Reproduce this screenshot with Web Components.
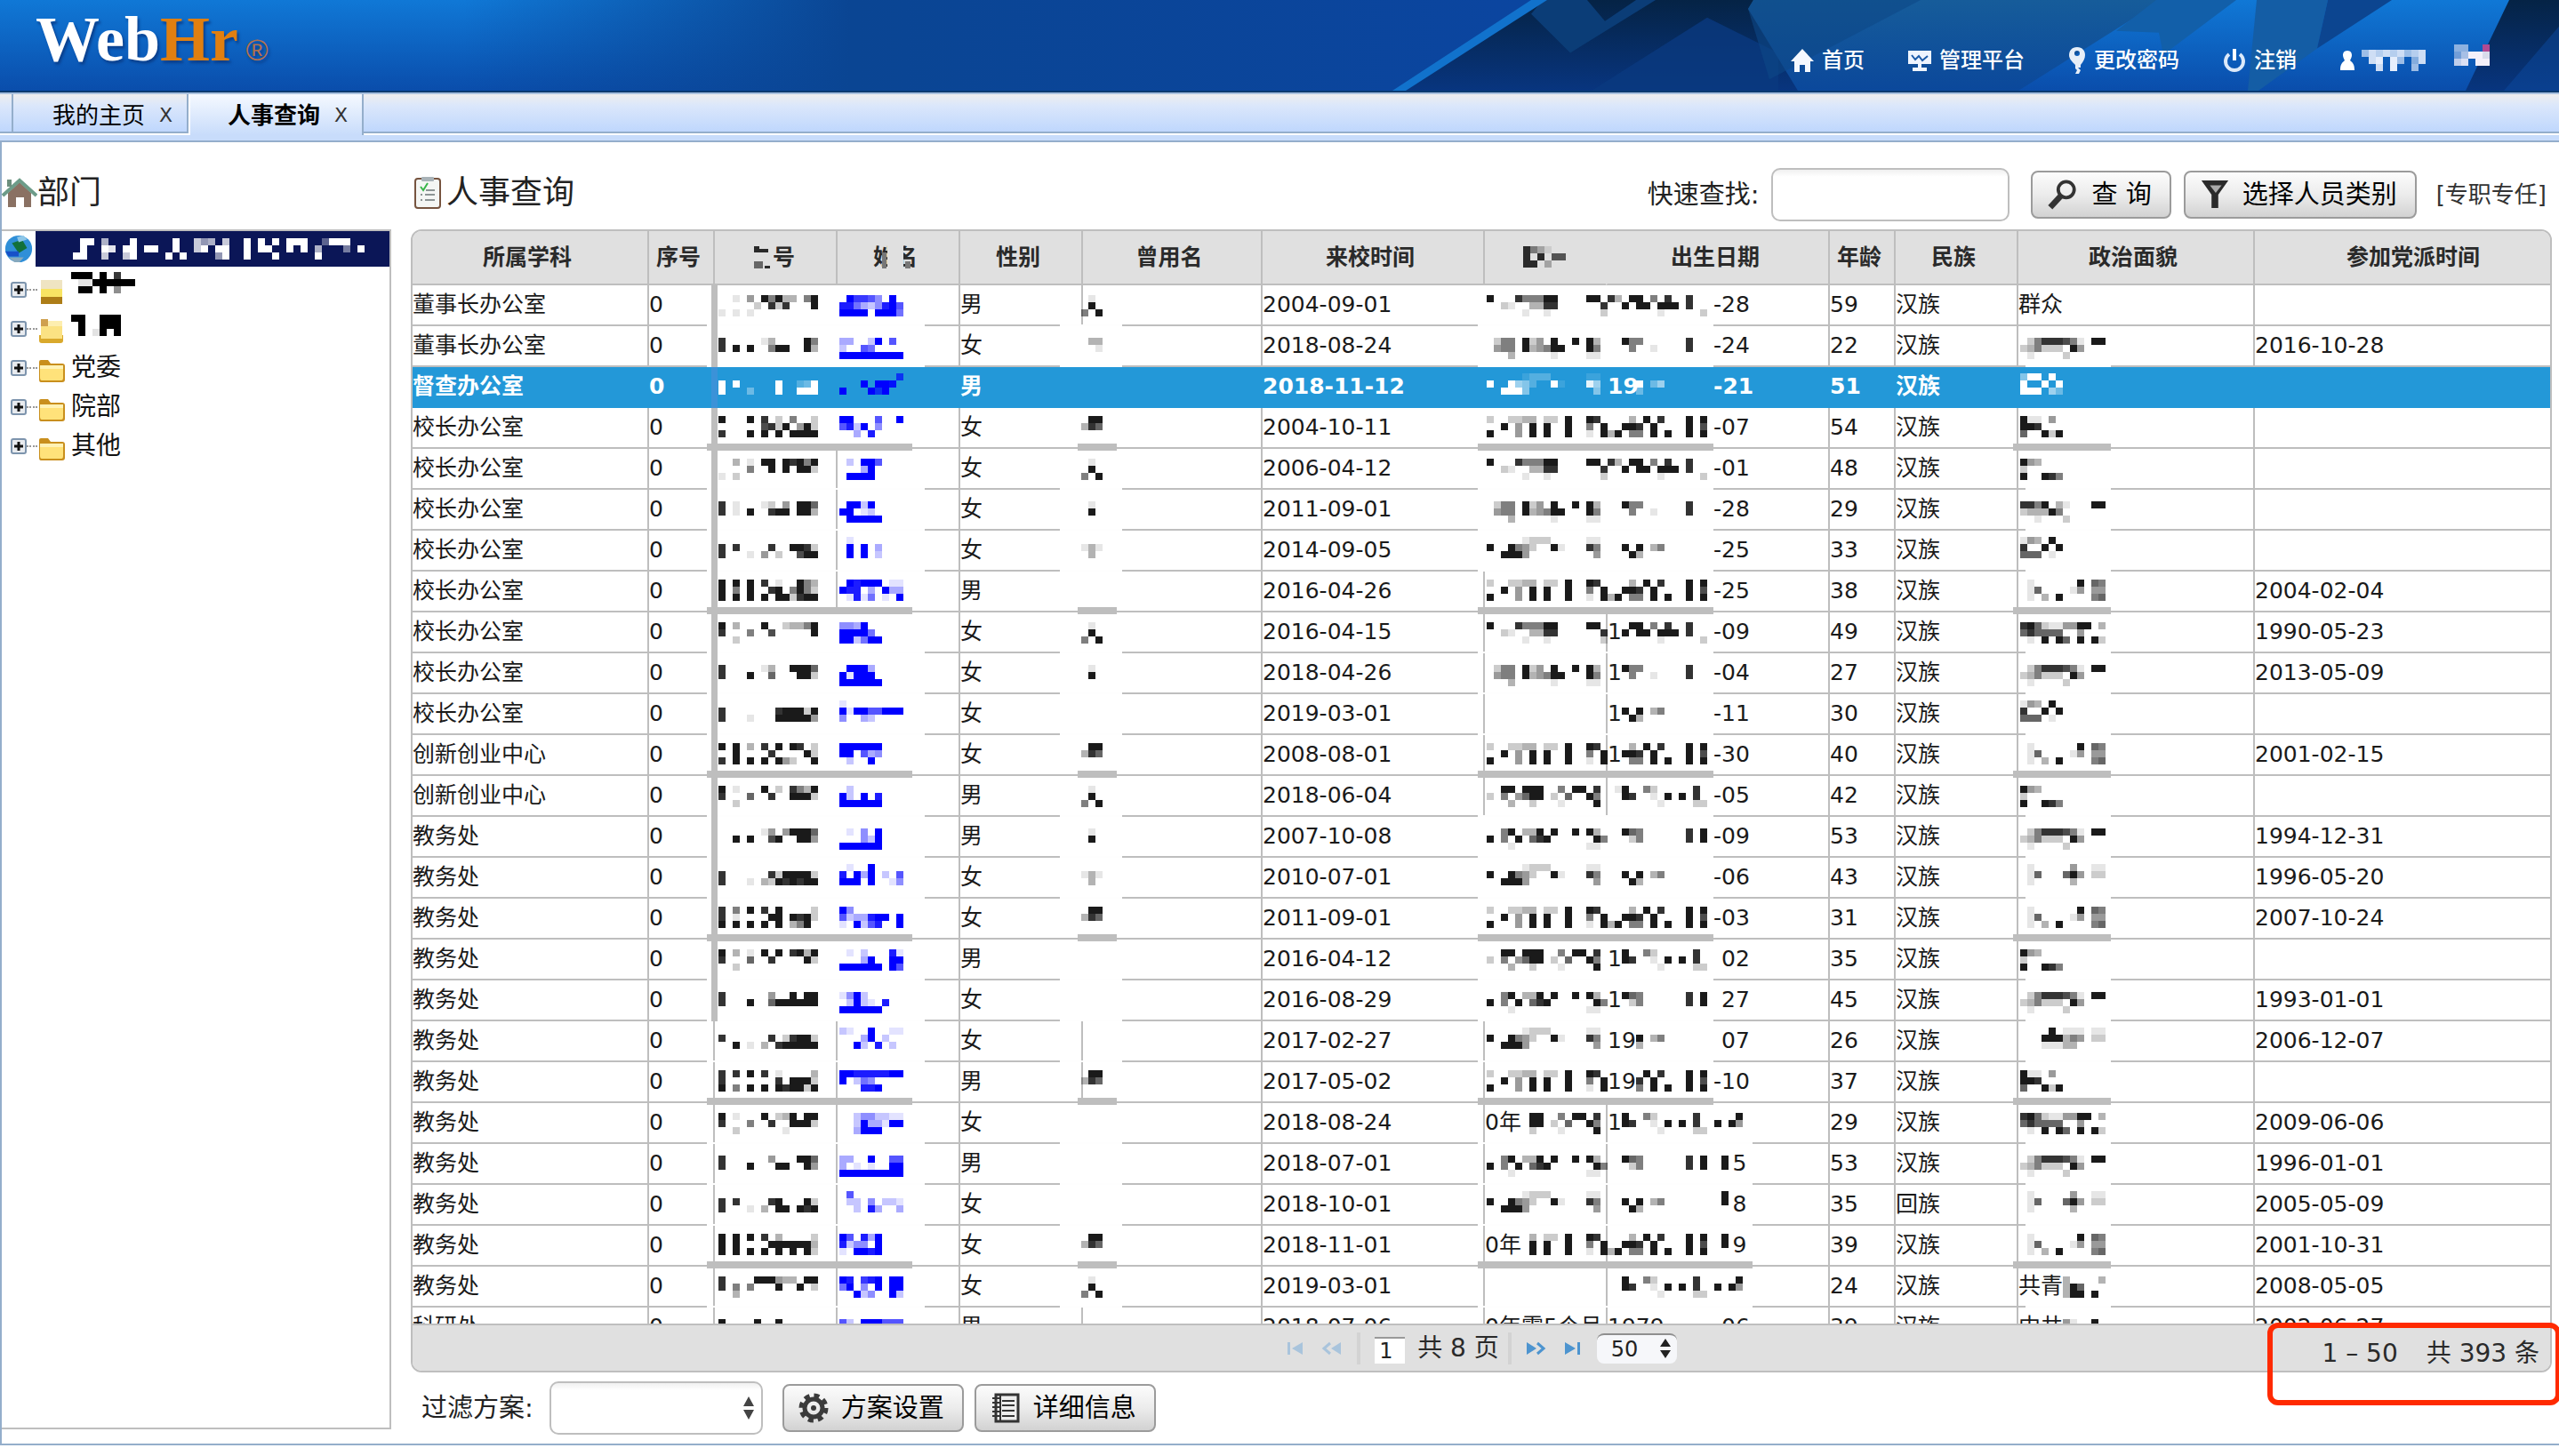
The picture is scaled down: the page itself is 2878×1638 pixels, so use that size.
<!DOCTYPE html>
<html lang="zh-CN">
<head>
<meta charset="utf-8">
<title>WebHr 人事查询</title>
<style>
  html, body { margin: 0; height: 100%; }
  body { font-family: "DejaVu Sans", "Noto Sans CJK SC", sans-serif; color: #1a1a1a; background: #fff; overflow: hidden; }
</style>
</head>
<body>
<hr-app></hr-app>
<script>
const FONT = '"DejaVu Sans", "Noto Sans CJK SC", sans-serif';
const LINE = '#bebebe';

function define(name, render, after) {
  customElements.define(name, class extends HTMLElement {
    constructor() { super(); this.attachShadow({ mode: 'open' }); }
    connectedCallback() {
      this.shadowRoot.innerHTML = render(this);
      if (after) after(this.shadowRoot, this);
    }
  });
}

/* ---------- icons ---------- */
const ICONS = {
  home: ['0 0 28 28', '<path fill="#f4f8ff" d="M14 1 27 15h-4v12h-6v-8h-6v8H5V15H1z"/>'],
  monitor: ['0 0 28 28', '<path fill="#eef4ff" d="M1 3h26v15H16v4h6v4H6v-4h6v-4H1z"/><path fill="none" stroke="#1b5aa8" stroke-width="2" d="M5 8l4 5 4-4 4 5 6-5"/>'],
  key: ['0 0 22 30', '<path fill="#e6eef8" fill-rule="evenodd" d="M11 0c6 0 9 4 9 9 0 4-2 7-5 11v3h-3l3 3-2 4H9l2-4-2-2v-4C5 16 2 13 2 9c0-5 3-9 9-9zm0 4a3 3 0 1 0 0 6 3 3 0 0 0 0-6z"/>'],
  power: ['0 0 28 28', '<path fill="none" stroke="#dce9fa" stroke-width="4" d="M8 7a10 10 0 1 0 12 0"/><path stroke="#fff" stroke-width="4" d="M14 1v13"/>'],
  user: ['0 0 18 22', '<path fill="#fff" d="M9 0c4 0 5 3 5 5s-1 4-2 6c4 3 5 6 5 11H1c0-5 1-8 5-11-1-2-2-4-2-6s1-5 5-5z"/>'],
  house: ['0 0 40 34', '<path fill="#8a7163" d="M7 17 20 5l13 12v16h-8V22h-9v11H7z"/><path fill="none" stroke="#6d9c89" stroke-width="4" d="M1 20 20 3l19 17"/><path fill="#6c8f7d" d="M6 2h5v8H6z"/>'],
  list: ['0 0 30 36', '<rect x="1" y="2" width="28" height="33" rx="3" fill="#f4f6f4" stroke="#76543f" stroke-width="2"/><rect x="8" y="0" width="14" height="5" rx="1" fill="#a9b3b8"/><path fill="none" stroke="#39b54a" stroke-width="2" d="M7 11l3 4 5-8"/><path stroke="#8c9494" stroke-width="2" d="M13 15h10M12 20h11M12 26h11M7 20h2M7 26h2"/>'],
  search: ['0 0 36 36', '<circle cx="22" cy="12" r="9.500" fill="none" stroke="#333" stroke-width="4"/><path stroke="#333" stroke-width="7" d="M15 20 3 33"/>'],
  filter: ['0 0 34 36', '<path fill="#2b2b2b" d="M1 1h32L21 18v16h-8V18z"/><path fill="#aaa" d="M11 7h14l-7 9z"/>'],
  gear: ['0 0 34 34', '<circle cx="17" cy="17" r="14" fill="none" stroke="#3b3b3b" stroke-width="5" stroke-dasharray="6 5"/><circle cx="17" cy="17" r="10" fill="none" stroke="#3b3b3b" stroke-width="5"/><circle cx="17" cy="17" r="3" fill="#3b3b3b"/>'],
  book: ['0 0 34 34', '<rect x="6" y="2" width="25" height="30" fill="#eee" stroke="#333" stroke-width="3"/><path stroke="#333" stroke-width="2" d="M13 9h14M13 14h14M13 20h14M13 26h14"/><path stroke="#333" stroke-width="2" d="M2 6h8M2 11h8M2 16h8M2 21h8M2 26h8M11 2v30"/>'],
  globe: ['0 0 36 34', '<circle cx="18" cy="17" r="16" fill="#2f8fd8"/><path fill="#12703a" d="M10 10l12-4 6 10-10 6z"/><path fill="#1650c8" d="M2 20h16v6H6z"/><path fill="#86a9be" d="M6 27h18l-5 6h-6z"/><path fill="#8ec7e8" d="M16 3l8-2 4 5-10 3z"/>'],
  folder: ['0 0 32 28', '<path fill="#c98f1d" d="M2 4q0-2 2-2h8l3 4h13q3 0 3 3v15q0 3-3 3H4q-2 0-2-3z"/><path fill="#ffe27a" d="M3 8h26v14q0 3-2 3H5q-2 0-2-3z"/><path fill="#fff2b5" d="M3 8h26v4H3z"/>'],
  folderMask: ['0 0 32 28', '<path fill="#efe4c2" d="M4 0h24v10H4z"/><path fill="#f8e463" d="M4 10h24v9H4z"/><path fill="#ad7d17" d="M4 19h24v8H4z"/>'],
  folderMask2: ['0 0 32 28', '<path fill="#cfa04e" d="M4 0h8v8H4z"/><path fill="#fdeeb0" d="M12 2h16v8H12z"/><path fill="#fbe283" d="M4 8h24v12H4z"/><path fill="#d9a92c" d="M2 18h27v6q0 3-3 3H5q-3 0-3-3z"/><path fill="#fbe283" d="M4 16h24v6H4z"/>'],
  plus: ['0 0 18 18', '<rect x="1" y="1" width="16" height="16" rx="2" fill="#e8ebef" stroke="#7d94ad" stroke-width="2"/><path stroke="#111" stroke-width="3" d="M9 4v10M4 9h10"/>'],
  first: ['0 0 24 20', '<path fill="#a9c4dc" d="M2 3h3v14H2zM19 3v14L7 10z"/>'],
  prev: ['0 0 24 20', '<path fill="none" stroke="#a9c4dc" stroke-width="3" d="M10 4 3 10l7 6"/><path fill="#a9c4dc" d="M22 3v14l-11-7z"/>'],
  next: ['0 0 24 20', '<path fill="#4d94cf" d="M1 3v14l11-7z"/><path fill="none" stroke="#4d94cf" stroke-width="3" d="M13 4l7 6-7 6"/>'],
  last: ['0 0 24 20', '<path fill="#4d94cf" d="M4 3v14l12-7zM18 3h3v14h-3z"/>']
};
define('hr-icon', el => {
  const [box, body] = ICONS[el.getAttribute('name')];
  const [, , w, h] = box.split(' ');
  return `<style>:host{display:inline-block;flex:none;line-height:0;white-space:normal}</style>
    <svg width="${el.getAttribute('w') || w}" height="${el.getAttribute('h') || h}" viewBox="${box}" aria-hidden="true">${body}</svg>`;
});

/* ---------- mosaic over private data: digits are opacity levels of 8px cells ---------- */
function cells(rows, x, y, color) {
  let out = '';
  rows.forEach((line, r) => [...line].forEach((c, i) => {
    if (c > '0' && c <= '9') out += `<rect x="${x + i * 8}" y="${y + r * 8}" width="8" height="8" fill="${color}" fill-opacity="${c / 9}"/>`;
  }));
  return out;
}
customElements.define('pixel-mask', class extends HTMLElement {
  constructor() { super(); this.attachShadow({ mode: 'open' }); }
  set shapes(v) {
    this.shadowRoot.innerHTML = `<style>:host{display:inline-block;width:0;height:0;vertical-align:top;line-height:0}svg{display:block;overflow:visible}</style>
      <svg width="1" height="1" shape-rendering="crispEdges" aria-hidden="true">${v}</svg>`;
  }
});
function mask(shapes) { const m = document.createElement('pixel-mask'); m.shapes = shapes; return m; }

/* ---------- button ---------- */
define('hr-button', () => `<style>
  :host{display:inline-flex;flex:none}
  button{display:inline-flex;align-items:center;gap:14px;height:54px;padding:0 20px 0 16px;border:2px solid #9b9b9b;border-radius:8px;
    background:linear-gradient(#fcfcfc,#ececec 50%,#d2d2d2);font:29px/36px ${FONT};color:#000;white-space:pre}
  </style><button type="button"><slot name="icon"></slot><slot></slot></button>`);

/* ---------- banner ---------- */
define('hr-banner', () => `<style>
  :host{display:grid;height:104px;border-bottom:2px solid #0b3a70;box-sizing:border-box;flex:none}
  svg.bg,.row{grid-area:1/1;min-width:0;min-height:0}
  svg.bg{width:100%;height:102px;display:block}
  .row{display:flex;justify-content:space-between;align-items:flex-start;z-index:1}
  .logo{display:flex;align-items:baseline;gap:8px;padding-left:40px;font:bold 72px/88px "Liberation Serif",serif;color:#fff;text-shadow:2px 3px 3px #0a3f8c}
  .logo b{color:#e07f10}
  .logo i{font:italic 34px/40px "Liberation Sans",sans-serif;color:#b5714d}
  nav{display:flex;align-items:center;gap:48px;height:62px;padding:37px 78px 0 0;box-sizing:content-box}
  a{display:flex;align-items:center;gap:8px;color:#fff;text-decoration:none;font:500 24px/32px ${FONT}}
  .me{gap:7px}
  .blk{display:block;width:72px;height:24px}
  .me + .blk{width:40px;margin-left:-16px}
  </style>
  <svg class="bg" viewBox="0 0 2878 103" preserveAspectRatio="none" aria-hidden="true">
    <defs>
      <linearGradient id="a" x2="0" y2="1"><stop stop-color="#1078d6"/><stop offset="1" stop-color="#0a4dab"/></linearGradient>
      <linearGradient id="b"><stop offset=".3" stop-color="#0a4593" stop-opacity="0"/><stop offset=".55" stop-color="#0a4593"/><stop offset="1" stop-color="#0b45a0"/></linearGradient>
      <linearGradient id="c" x2="0" y2="1"><stop stop-color="#052345"/><stop offset="1" stop-color="#08357f"/></linearGradient>
      <linearGradient id="d" x2="0" y2="1"><stop stop-color="#165c9a"/><stop offset="1" stop-color="#0b489b"/></linearGradient>
    </defs>
    <rect width="2878" height="103" fill="url(#a)"/>
    <rect width="1740" height="103" fill="url(#b)"/>
    <path fill="url(#c)" d="M1575 103 1735 0h350v103z"/>
    <path fill="#0a3a80" fill-opacity=".8" d="M1790 103 1920 20 2000 60v43z"/>
    <path fill="#0b3d77" d="M1722 16 1735 0h50l20 24L1840 0h22l-96 60z"/>
    <path fill="#1172cc" d="M1566 103 1722 0h18L1581 103z"/>
    <path fill="url(#d)" d="M1966 10 1972 0h460L2270 103H2022z"/>
    <path fill="#0d4787" fill-opacity=".6" d="M1990 90 2160 0H1972l-6 10z"/>
    <path fill="#125fa9" d="M2380 35 2425 0h90l-82 62-5-25z"/>
    <path fill="#145da5" d="M2538 0h80l-12 55-66 48h-12z"/>
    <path fill="#0c4590" d="M2618 0h72l-84 55z"/>
    <path fill="url(#c)" d="M2822 0h56v103h-105z"/>
    <path fill="#0c4a9f" fill-opacity=".5" d="M2878 30v73h-62z"/>
  </svg>
  <div class="row">
    <div class="logo"><span>Web<b>Hr</b></span><i>®</i></div>
    <nav>
      <a href="#home"><hr-icon name="home"></hr-icon>首页</a>
      <a href="#admin"><hr-icon name="monitor"></hr-icon>管理平台</a>
      <a href="#password"><hr-icon name="key"></hr-icon>更改密码</a>
      <a href="#logout"><hr-icon name="power"></hr-icon>注销</a>
      <a class="me" href="#me" aria-label="用户"><hr-icon name="user"></hr-icon><span class="blk" id="m1"></span></a>
      <span class="blk" id="m2"></span>
    </nav>
  </div>`,
  root => {
    root.getElementById('m1').append(mask(cells(['687878678', '.89.96.58', '..8.9..6.'], 0, 0, '#e6eefc')));
    root.getElementById('m2').append(mask(cells(['55...', '46998', '78.99'], 0, -6, '#f4f0fa') + '<rect x="32" y="-6" width="8" height="8" fill="#b14a93"/>'));
  });

/* ---------- tabs ---------- */
define('hr-tabs', () => `<style>
  :host{display:block;flex:none;border-top:2px solid #a9c1de;border-bottom:2px solid #94aecb;background:#c8dcfb}
  .strip{display:flex;height:42px;padding-left:13px;border-bottom:2px solid #94aecb;background:linear-gradient(#eeeeee,#dbe7fb 30%,#bfd7fd)}
  .base{height:8px;border-top:2px solid #fff;box-sizing:border-box}
  .tab{display:flex;align-items:center;box-sizing:border-box;height:42px;padding:6px 16px 0 44px;gap:16px;border:solid #94aecb;border-width:0 2px}
  .tab + .tab{border-left-color:#fff;padding-left:42px}
  .tab.on{height:46px;padding-bottom:4px;background:linear-gradient(#f5f9ff,#c8dcfb)}
  button{border:0;padding:0;background:none;font:26px/36px ${FONT};color:#000}
  .on button:first-child{font-weight:bold}
  button.x{font-size:22px;color:#333}
  </style>
  <div class="strip">
    <div class="tab"><button type="button">我的主页</button><button class="x" type="button" aria-label="关闭我的主页">X</button></div>
    <div class="tab on"><button type="button">人事查询</button><button class="x" type="button" aria-label="关闭人事查询">X</button></div>
  </div><div class="base"></div>`);

/* ---------- department tree ---------- */
define('hr-tree', () => `<style>
  :host{display:flex;flex-direction:column;width:438px;flex:none}
  h2{display:flex;align-items:center;margin:0;height:98px;padding-top:16px;box-sizing:border-box;font:36px/48px ${FONT};color:#222}
  .box{flex:1;border:2px solid ${LINE};border-left:0;margin-bottom:16px}
  ul{list-style:none;margin:0;padding:0}
  .root{display:flex;align-items:center;height:40px}
  .root hr-icon{width:38px;text-align:center}
  .sel{flex:1;height:40px;background:#0b1657}
  li.n{display:flex;align-items:center;height:44px;padding-left:10px;font:28px/40px ${FONT};color:#111}
  li.n button{border:0;padding:0;background:none;line-height:0}
  .dash{width:12px;border-top:2px dotted #999}
  li.n hr-icon.f{margin:6px 6px 0 0}
  ul.kids{padding-top:4px}
  </style>
  <h2><hr-icon name="house"></hr-icon>部门</h2>
  <div class="box">
    <div class="root"><hr-icon name="globe" w="34"></hr-icon><span class="sel"></span></div>
    <ul class="kids">${['', '', '党委', '院部', '其他'].map((t, i) => `<li class="n"><button type="button" aria-label="展开"><hr-icon name="plus"></hr-icon></button><span class="dash"></span><hr-icon class="f" name="${t ? 'folder' : i ? 'folderMask2' : 'folderMask'}"></hr-icon><span>${t}</span></li>`).join('')}</ul>
  </div>`,
  root => {
    root.querySelector('.sel').append(mask(cells(
      ['...99.6...9.....9..756.7..9.9.9.999..3999',
       '...9..98.99.99..9..79.99..9.99..9.9.6...4.9',
       '..99..7..79....9.9....59..9...9.....9......'], 26, 8, '#fff')));
    const k = root.querySelectorAll('li.n span:last-child');
    k[0].append(mask(cells(['999.9.7..', '.11999999', '.99.9.4'], 0, 0, '#000')));
    k[1].append(mask(cells(['99..999', '.9..999', '.9.19.9'], 0, 4, '#000')));
  });

/* ---------- search toolbar ---------- */
define('hr-toolbar', () => `<style>
  :host{display:flex;align-items:center;height:98px;padding-top:20px;box-sizing:border-box;flex:none}
  h2{display:flex;align-items:center;gap:6px;margin:-4px auto 0 4px;font:36px/48px ${FONT};color:#222}
  label{font:29px/36px ${FONT};color:#222;margin-right:14px}
  input{width:268px;height:60px;box-sizing:border-box;border:2px solid ${LINE};border-radius:10px;background:linear-gradient(#f0f0f0,#fff 14%);font:28px/36px ${FONT};padding:0 10px;margin-right:24px}
  hr-button{margin-right:14px}
  a{font:26px/36px ${FONT};color:#333;text-decoration:none;margin:0 6px 0 8px}
  </style>
  <h2><hr-icon name="list"></hr-icon>人事查询</h2>
  <label for="q">快速查找:</label><input id="q" type="text">
  <hr-button><hr-icon slot="icon" name="search" h="34"></hr-icon>查 询</hr-button>
  <hr-button><hr-icon slot="icon" name="filter" h="34"></hr-icon>选择人员类别</hr-button>
  <a href="#type">[专职专任]</a>`);

/* ---------- data grid ---------- */
// dept, gender, joined, birth-head, birth-tail, age, nation, party text, party mosaic, party date
const ROWS = [
  ['董事长办公室','男','2004-09-01','','-28','59','汉族','群众','','' ],
  ['董事长办公室','女','2018-08-24','','-24','22','汉族','','A','2016-10-28'],
  ['督查办公室','男','2018-11-12','19','-21','51','汉族','','C',''],
  ['校长办公室','女','2004-10-11','','-07','54','汉族','','D',''],
  ['校长办公室','女','2006-04-12','','-01','48','汉族','','E',''],
  ['校长办公室','女','2011-09-01','','-28','29','汉族','','B',''],
  ['校长办公室','女','2014-09-05','','-25','33','汉族','','F',''],
  ['校长办公室','男','2016-04-26','','-25','38','汉族','','G','2004-02-04'],
  ['校长办公室','女','2016-04-15','1','-09','49','汉族','','H','1990-05-23'],
  ['校长办公室','女','2018-04-26','1','-04','27','汉族','','A','2013-05-09'],
  ['校长办公室','女','2019-03-01','1','-11','30','汉族','','F',''],
  ['创新创业中心','女','2008-08-01','1','-30','40','汉族','','G','2001-02-15'],
  ['创新创业中心','男','2018-06-04','','-05','42','汉族','','E',''],
  ['教务处','男','2007-10-08','','-09','53','汉族','','A','1994-12-31'],
  ['教务处','女','2010-07-01','','-06','43','汉族','','K','1996-05-20'],
  ['教务处','女','2011-09-01','','-03','31','汉族','','G','2007-10-24'],
  ['教务处','男','2016-04-12','1','02','35','汉族','','E',''],
  ['教务处','女','2016-08-29','1','27','45','汉族','','A','1993-01-01'],
  ['教务处','女','2017-02-27','19','07','26','汉族','','L','2006-12-07'],
  ['教务处','男','2017-05-02','19','-10','37','汉族','','D',''],
  ['教务处','女','2018-08-24','1','','29','汉族','','H','2009-06-06'],
  ['教务处','男','2018-07-01','','5','53','汉族','','A','1996-01-01'],
  ['教务处','女','2018-10-01','','8','35','回族','','K','2005-05-09'],
  ['教务处','女','2018-11-01','','9','39','汉族','','G','2001-10-31'],
  ['教务处','女','2019-03-01','','','24','汉族','共青','M','2008-05-05'],
  ['科研处','男','2018-07-06','1979','06','39','汉族','中共','N','2002-06-27']
];
const PERIOD_TEXT = { 20: '0年', 23: '0年', 25: '0年零5个月' };
const PARTY = {
  A: ['.25888751.99', '235222.94...', '.1....2.....'],
  B: ['8859.31...99', '233395......', '..1...2.....'],
  C: ['499.9.......', '9..9.9......', '999.53......'],
  D: ['911.4.......', '998.........', '6..929......'],
  E: ['943.........', '2...........', '9..985......'],
  F: ['143.9.......', '8..9.9......', '666.1.......'],
  G: ['.1......9.65', '.16....14.44', '.1.3.9....56'],
  H: ['8962114499.3', '686666..4...', '.1.9.96.9.92'],
  K: ['.1.....4..11', '.16...694.22', '.1.....3....'],
  L: ['....9.111.11', '...999354.22', '...11133....'],
  M: ['......3....3', '......396...', '......399.9.'],
  N: ['......41..9.', '......3.1.9.']
};
const IDS = [
  ['..1.4.95933.59','.....2.828...9','1.1.1.........'],
  ['8.....13....95','8.9.9..599..93'],
  ['','9.9.....9..239','9...3...9..999'],
  ['9...9.8.2.5..2','......7829.492','8...9.9.9.9999'],
  ['..3.1.99.98959','....5..9.9.992','1.2...........'],
  ['8.1...12.4.996','8.1.9..899.993'],
  ['','8.8....8..9982','8...1.4.2..799'],
  ['9.9.9.8.1..953','9.5.9..89.5952','9.9.9.9.992899'],
  ['9.3...9..23359','8...5..7.....9','..2...........'],
  ['8.....13..9996','8...9..6...992'],
  ['','8.......899929','8...1...999994'],
  ['9.9.3.8.9.98.2','..9....8....92','8.9.9.9.942..9'],
  ['9.1...9.2.8539','8...6..8..9992','..2...........'],
  ['......14.49996','..9.9..79..994'],
  ['','8......8299992','8...1.32989899'],
  ['8.5.9.8.9....2','8.1....99.9892','9.9.9.9.9.359.'],
  ['9.3.1.9.9.8939','8...6..8....92','..2...........'],
  ['8......4..9.99','8...9..6999999'],
  ['','8......8.28992','..9.1.3.899999'],
  ['8.8.9.8.1....3','8.......8.9992','9.5.9.9.989929'],
  ['9.1...9.239.99','8...5..8..9992','..2......1....'],
  ['8......4...996','8...9...99..94'],
  ['','8.8....89...92','8...1.3.99.989'],
  ['9.9.9.8.3....2','9.9....9999993','9.9.9.9.9.9.92'],
  ['8....999433.99','8.5.5...9..9.2','..3...........'],
  ['9....9..9.....','...9....7.....']
];
const NAMES = [
  ['.97764.9.','885324896','9999.9995'], ['33..29.6.','2..65....','999999999'],
  ['........6','...9.998.','9...969..'], ['99...6..9','6829.4...','..3.8....'],
  ['.2.996...','...39....','.9999....'], ['.9929....','99.12....','.99999...'],
  ['.1.......','.9.9.3...','.9.9.2...'], ['.98999.11','988.3.933','.1815.1.9'],
  ['4439.....','99995....','992599...'], ['.9993....','91999....','999999...'],
  ['1........','919966999','4..32....'], ['999999...','99.634...','.2..9....'],
  ['.2.......','92.9.8...','999999...'], ['.1.4.9...','...429...','999999...'],
  ['.1..9....','8.939.2.6','999.9..14'], ['94.......','6233899.9','1.9268..9'],
  ['.1.2...81','...39..99','999999.96'], ['1492.....','.2921.8..','999999...'],
  ['21..9..11','...39.2..','..92.8.2.'], ['998888899','9.254....','...889...'],
  ['..2442211','..2933199','..3999...'], ['33..9..66','3.1.1..99','999999999'],
  ['.6.......','.22.4.221','..2.83..3'], ['96.839...','8244.9...','1.9989...'],
  ['98.789.99','59.4.9.99','..924..92'], ['62.999666','62.999666']
];
const STRIP = [
  ['9...855599....99.83.99.5.8..8..','..21..3388......8..9.99.999.8..','.....1..1.......2.......1.....2'],
  ['.255.924.9..9.93...955......8..','.455.934599...95....5..1....8..','...3.....1....11...............'],
  ['.....1222.....11...............','9..9542..91...85...9.9.35......','..9994.........4....93.........'],
  ['2..2233.22.9..98....3.9.8...9.9','..9.4.9.9..9..5.9..998.9....9.7','9...4.9.9..9..1.939.55.9.9..9.9'],
  ['..99.999..5.99.8..19..52.....8.','2.5.4699.2.6..95...98..1.9.9.8.','...3..2...1....9........1....22'],
  ['..59.339.9..9.93...965......8.9','9.5.9.689......95...25......8.9','...1..........11...............']
];
const OFFS = [11, 13, 7, 9];
const FORMER = { 0: 0, 1: 4, 3: 3, 4: 0, 5: 1, 6: 2, 8: 0, 9: 1, 11: 3, 12: 0, 13: 1, 14: 2, 15: 3, 19: 3, 23: 3, 24: 0 };
const FORM_SHAPES = [['.1.', '.9.', '5.9'], ['.1.', '.9.'], ['', '131', '.3.'], ['.99', '386'], ['.33', '..1']];

// hides the row line between two x positions, or thickens it on every fourth row
function veil(n, x1, x2, bg) {
  if (n % 4 === 3) return `<rect x="${x1}" y="40" width="${x2 - x1}" height="8" fill="${LINE}"/>`;
  return `<rect x="${x1}" y="44" width="${x2 - x1}" height="2" fill="${bg}"/>`;
}

define('hr-grid', () => `<style>
  :host{display:block;flex:1;min-height:0;overflow:hidden}
  table{width:100%;table-layout:fixed;border-spacing:0;font:25px/44px ${FONT};color:#1a1a1a}
  th,td{box-sizing:border-box;padding:0;border-left:2px solid ${LINE};border-bottom:2px solid ${LINE};text-align:left;vertical-align:top;white-space:nowrap}
  th:first-child,td:first-child{border-left:0}
  th{height:61px;padding-right:6px;line-height:59px;background:#e0e0e0;text-align:center;color:#2a2a2a;font-weight:bold}
  th:last-child{padding:0 0 0 24px}
  td{height:46px}
  .nb{border-left-color:transparent}
  tr.sel td{background:#2398d8;border-color:#2398d8;color:#fff;font-weight:bold}
  .head{display:inline-block;width:119px}
  .tail1{display:inline-block;width:128px}
  </style>
  <table>
    <colgroup>${[264, 74, 138, 138, 138, 202, 250, 138, 250, 74, 138, 266].map(w => `<col style="width:${w}px">`).join('')}<col></colgroup>
    <thead><tr><th>所属学科</th><th>序号</th><th id="h1">工号</th><th id="h2">姓名</th><th>性别</th><th>曾用名</th><th>来校时间</th><th id="h3" aria-label="校龄"></th><th class="nb">出生日期</th><th>年龄</th><th>民族</th><th>政治面貌</th><th>参加党派时间</th></tr></thead>
    <tbody></tbody>
  </table>`,
  root => {
    const cover = (x, y, w, h) => `<rect x="${x}" y="${y}" width="${w}" height="${h}" fill="#e0e0e0"/>`;
    root.getElementById('h1').append(mask(cover(-51, 14, 27, 32)
      + '<path fill="#2a2a2a" d="M-46 17h6v3h10v4h-16zM-34 39h6v3h-6z"/><path fill="#666" d="M-46 34h10v8h-10z"/>'));
    root.getElementById('h2').append(mask(cover(-34, 14, 18, 32) + '<path fill="#777" d="M-14 34h6v8h-6zM-40 24h5v18h-5z"/>'));
    root.getElementById('h3').append(mask(cells(['9531..', '9.9.77', '99.3..'], -22, 17, '#2a2a2a')));
    const body = root.querySelector('tbody');
    ROWS.forEach((r, n) => {
      const [dept, sex, joined, head, tail, age, nation, party, pm, pdate] = r;
      const sel = n === 2, ink = sel ? '#fff' : '#1a1a1a', bg = sel ? '#2398d8' : '#fefefe';
      const y = OFFS[n % 4];
      const tr = body.insertRow();
      if (sel) tr.className = 'sel';
      const add = (text, cls, shapes) => {
        const td = tr.insertCell();
        if (cls) td.className = cls;
        if (shapes) td.append(mask(shapes));
        if (text) td.append(text);
        return td;
      };
      add(dept); add('0');
      const bar = n < 18 ? `<rect x="-4" y="0" width="7" height="46" fill="${sel ? '#3b92d8' : LINE}"/>` : '';
      add('', '', veil(n, -9, 138, bg) + bar + cells(IDS[n], 4, y, ink));
      const hideName = n < 4 || (n > 7 && n < 18);
      add('', hideName ? 'nb' : '', veil(n, -2, n % 4 === 3 ? 84 : 98, bg) + cells(NAMES[n], 2, y, '#00f'));
      add(sex);
      const fk = FORMER[n], fs = fk === undefined ? '' : cells(FORM_SHAPES[fk], -2, y, ink);
      const fv = n % 4 === 3 ? veil(n, -6, 38, bg) : veil(n, -26, 44, bg);
      add('', n === 0 || n === 18 || n === 19 || n === 25 ? '' : 'nb', fv + fs);
      add(joined);
      let strip = STRIP[n % 4];
      if (n > 11 && n % 4 === 0) strip = STRIP[4];
      if (n > 12 && n % 4 === 1) strip = STRIP[5];
      if (head) {
        const skip = head.length > 1 ? 4 : 2;
        strip = strip.map(s => s.slice(0, 17) + '.'.repeat(skip) + s.slice(17 + skip));
      }
      if (n === 10 || n === 24) strip = strip.map(s => '.'.repeat(19) + s.slice(19));
      if (n > 19 && n < 25) strip = strip.map((s, i) => s.padEnd(32, '.') + (tail ? ['.9', '.9', ''] : ['...9', '9.94', ''])[i]);
      if (PERIOD_TEXT[n]) strip = n === 25 ? [] : strip.map(s => '......' + s.slice(6));
      add(PERIOD_TEXT[n] || '', n < 7 || (n > 12 && n < 18) ? 'nb' : '', (n === 25 ? '' : veil(n, -8, 257 + (n > 19 ? 44 : 0), bg)) + cells(strip, 2, y, ink));
      const dob = add('', n > 7 && n < 13 || n > 19 ? '' : 'nb');
      // the birth date keeps its year start and its day around the mosaic
      const h = document.createElement('span');
      h.className = tail.length === 3 ? 'head' : 'tail1';
      h.textContent = head || '';
      if (tail.length === 1) { h.textContent = '\u00a0'; dob.append(h, '\u2002' + tail); }
      else dob.append(h, tail);
      add(age); add(nation);
      const pv = pm && pm !== 'N' ? veil(n, n % 4 === 3 ? -6 : 8, 104, bg) : '';
      add(party, '', pv + (pm ? cells(PARTY[pm], 2, y, ink) : ''));
      add(pdate);
    });
  });

/* ---------- pager ---------- */
define('hr-pager', () => `<style>
  :host{display:grid;grid-template-columns:1fr auto 1fr;align-items:center;height:51px;flex:none;border-top:2px solid ${LINE};background:#e0e0e0;font:28px/36px ${FONT};color:#2a2a2a}
  .mid{grid-column:2;display:flex;align-items:center}
  button{border:0;background:none;padding:0;margin-right:16px;line-height:0}
  .sep{width:4px;height:36px;background:#d3d3d3}
  .pg{width:34px;height:30px;box-sizing:border-box;border:0;border-top:2px solid #999;background:#fff;margin:4px 14px 0 16px;padding:0 5px;font:24px/28px ${FONT};color:#222}
  .sep.b{margin:0 16px 0 10px}
  .wrap{display:grid;align-items:center}
  select{appearance:none;width:90px;height:34px;box-sizing:border-box;border:0;border-top:2px solid #8f8f8f;border-radius:8px;background:#f6f7fa;padding:0 0 0 16px;font:24px/30px ${FONT};color:#222;grid-area:1/1}
  .wrap svg{grid-area:1/1;justify-self:end;margin-right:7px;pointer-events:none}
  .info{display:flex;gap:32px;justify-self:end;padding:12px 12px 0 0;line-height:36px}
  </style>
  <div class="mid">
    <button type="button" aria-label="首页"><hr-icon name="first"></hr-icon></button>
    <button type="button" aria-label="上一页"><hr-icon name="prev"></hr-icon></button>
    <span class="sep"></span>
    <input class="pg" type="text" value="1" aria-label="页码">
    <span>共 8 页</span>
    <span class="sep b"></span>
    <button type="button" aria-label="下一页"><hr-icon name="next"></hr-icon></button>
    <button type="button" aria-label="末页"><hr-icon name="last"></hr-icon></button>
    <span class="wrap"><select aria-label="每页条数"><option>50</option></select>
      <svg width="12" height="24" viewBox="0 0 12 24"><path fill="#222" d="M6 1l6 9H0zM6 23l6-9H0z"/></svg></span>
  </div>
  <div class="info"><span>1 – 50</span><span>共 393 条</span></div>`);

/* ---------- bottom bar ---------- */
define('hr-actions', () => `<style>
  :host{display:flex;align-items:center;height:80px;padding-left:12px;flex:none}
  label{font:29px/36px ${FONT};color:#222;margin-right:18px}
  .wrap{display:grid;align-items:center;margin-right:22px}
  select{appearance:none;grid-area:1/1;width:240px;height:60px;box-sizing:border-box;border:2px solid ${LINE};border-radius:10px;background:linear-gradient(#f0f0f0,#fff 14%);font:28px/36px ${FONT}}
  .wrap svg{grid-area:1/1;justify-self:end;margin-right:9px;pointer-events:none}
  hr-button{margin-right:12px}
  </style>
  <label for="plan">过滤方案:</label>
  <span class="wrap"><select id="plan"><option></option></select>
    <svg width="14" height="26" viewBox="0 0 14 26"><path fill="#444" d="M7 0l6 11H1zM7 26l6-11H1z"/></svg></span>
  <hr-button><hr-icon slot="icon" name="gear"></hr-icon>方案设置</hr-button>
  <hr-button><hr-icon slot="icon" name="book"></hr-icon>详细信息</hr-button>`);

/* ---------- page ---------- */
define('hr-app', () => `<style>
  :host{display:flex;flex-direction:column;height:100vh}
  main{display:flex;gap:22px;flex:1;min-height:0;box-sizing:border-box;border-left:2px solid #94aecb;border-bottom:2px solid #94aecb;margin-bottom:12px;padding-right:8px}
  section{display:flex;flex-direction:column;flex:1;min-width:0}
  .card{display:flex;flex-direction:column;flex:1;min-height:0;border:2px solid ${LINE};border-radius:12px;overflow:hidden}
  .wrap{position:relative;display:flex;flex-direction:column;flex:1;min-height:0}
  .mark{position:absolute;right:-10px;bottom:-37px;width:330px;height:93px;box-sizing:border-box;border:6px solid #ff2a00;border-radius:12px}
  </style>
  <hr-banner></hr-banner>
  <hr-tabs></hr-tabs>
  <main>
    <hr-tree></hr-tree>
    <section>
      <hr-toolbar></hr-toolbar>
      <div class="wrap">
        <div class="card"><hr-grid></hr-grid><hr-pager></hr-pager></div>
        <div class="mark"></div>
      </div>
      <hr-actions></hr-actions>
    </section>
  </main>`);
</script>
</body>
</html>
